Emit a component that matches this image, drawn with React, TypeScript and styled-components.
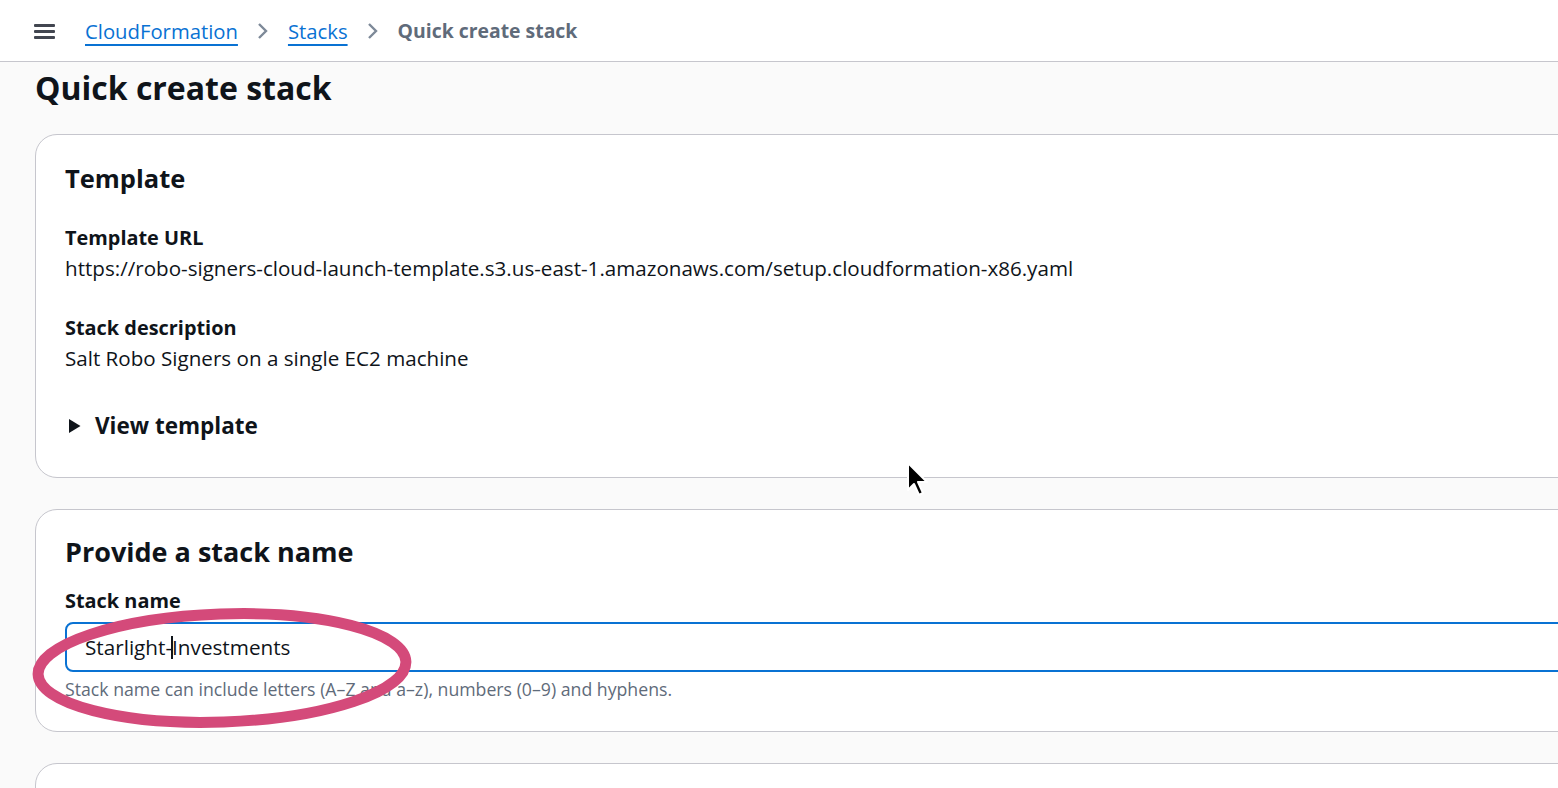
import React from "react";
import styled, { createGlobalStyle } from "styled-components";

const GlobalStyle = createGlobalStyle`
  html, body {
    margin: 0;
    padding: 0;
    background: #fafafa;
    overflow: hidden;
  }
  body {
    font-family: "Open Sans", "Noto Sans", Arial, sans-serif;
    color: #0f141a;
  }
`;

const Page = styled.div`
  position: relative;
  width: 100%;
  height: 788px;
  overflow: hidden;
`;

const TopBar = styled.header`
  height: 62px;
  box-sizing: border-box;
  background: #ffffff;
  border-bottom: 1px solid #c6c6cd;
  display: flex;
  align-items: center;
  padding-left: 34px;
  gap: 30px;
`;

const MenuButton = styled.span`
  display: flex;
  flex-direction: column;
  justify-content: space-between;
  width: 21px;
  height: 15px;
  margin-top: 2px;

  & span {
    display: block;
    height: 3px;
    background: #424650;
    border-radius: 1px;
  }
`;

const Crumbs = styled.nav`
  display: flex;
  align-items: center;
  gap: 19px;
  font-size: 20.3px;
`;

const CrumbLink = styled.a`
  color: #0972d3;
  text-decoration: underline;
  text-decoration-thickness: 2px;
  text-underline-offset: 5px;
`;

const CrumbCurrent = styled.span`
  color: #5f6b7a;
  font-weight: 700;
  font-size: 19.4px;
`;

const Chevron = () => (
  <svg width="12" height="20" viewBox="0 0 12 20">
    <path d="M2 3 L9 10 L2 17" fill="none" stroke="#7d8998" strokeWidth="2.4" />
  </svg>
);

const Main = styled.main`
  padding-left: 35px;
`;

const Title = styled.h1`
  margin: 6px 0 26px 0;
  font-size: 32px;
  line-height: 40px;
  font-weight: 700;
`;

const Card = styled.section<{ $pt: number; $pb: number }>`
  width: 1600px;
  box-sizing: border-box;
  background: #ffffff;
  border: 1px solid #c6c6cd;
  border-radius: 22px;
  padding: ${({ $pt }) => $pt}px 30px ${({ $pb }) => $pb}px 29px;
  margin-bottom: 31px;
`;

const CardHeading = styled.h2<{ $size: number }>`
  margin: 0;
  font-size: ${({ $size }) => $size}px;
  line-height: 32px;
  font-weight: 700;
`;

const Field = styled.div<{ $mt: number }>`
  margin-top: ${({ $mt }) => $mt}px;
  line-height: 30px;
`;

const Label = styled.div`
  font-size: 19.9px;
  font-weight: 700;
`;

const Value = styled.div`
  font-size: 20.6px;
  color: #0f141a;
`;

const Expander = styled.div`
  margin-top: 38px;
  display: flex;
  align-items: center;
  gap: 14px;
  font-size: 22.5px;
  line-height: 30px;
  font-weight: 700;
  padding-left: 3px;
`;

const InputLabel = styled.div`
  margin-top: 18px;
  font-size: 19.9px;
  line-height: 30px;
  font-weight: 700;
`;

const InputBox = styled.div`
  margin-top: 6px;
  height: 50px;
  box-sizing: border-box;
  border: 2px solid #0972d3;
  border-radius: 8px;
  display: flex;
  align-items: center;
  padding-left: 18px;
  font-size: 20.7px;
  color: #0f141a;
`;

const Caret = styled.span`
  display: inline-block;
  width: 2px;
  height: 23px;
  background: #0f141a;
  vertical-align: -4px;
  margin: 0 -1px;
`;

const Hint = styled.div`
  margin-top: 5px;
  font-size: 17.7px;
  line-height: 24px;
  color: #5f6b7a;
`;

const Annotation = styled.svg`
  position: absolute;
  left: 26px;
  top: 601px;
  pointer-events: none;
`;

const Pointer = styled.svg`
  position: absolute;
  left: 903px;
  top: 460px;
`;

export default function App() {
  return (
    <Page>
      <GlobalStyle />
      <TopBar>
        <MenuButton>
          <span />
          <span />
          <span />
        </MenuButton>
        <Crumbs>
          <CrumbLink>CloudFormation</CrumbLink>
          <Chevron />
          <CrumbLink>Stacks</CrumbLink>
          <Chevron />
          <CrumbCurrent>Quick create stack</CrumbCurrent>
        </Crumbs>
      </TopBar>
      <Main>
        <Title>Quick create stack</Title>
        <Card $pt={27} $pb={36}>
          <CardHeading $size={25.5}>Template</CardHeading>
          <Field $mt={29}>
            <Label>Template URL</Label>
            <Value>
              https://robo-signers-cloud-launch-template.s3.us-east-1.amazonaws.com/setup.cloudformation-x86.yaml
            </Value>
          </Field>
          <Field $mt={30}>
            <Label>Stack description</Label>
            <Value>Salt Robo Signers on a single EC2 machine</Value>
          </Field>
          <Expander>
            <svg width="13" height="16" viewBox="0 0 13 16">
              <path d="M1 1 L12.5 8 L1 15 Z" fill="#0f141a" strokeLinejoin="round" />
            </svg>
            View template
          </Expander>
        </Card>
        <Card $pt={26} $pb={30}>
          <CardHeading $size={27}>Provide a stack name</CardHeading>
          <InputLabel>Stack name</InputLabel>
          <InputBox>
            <span>
              Starlight-<Caret />Investments
            </span>
          </InputBox>
          <Hint>Stack name can include letters (A–Z and a–z), numbers (0–9) and hyphens.</Hint>
        </Card>
        <Card $pt={26} $pb={30} style={{ height: 60 }} />
      </Main>
      <Annotation width="400" height="135" viewBox="0 0 400 135">
        <ellipse
          cx="196"
          cy="67"
          rx="184"
          ry="54"
          fill="none"
          stroke="#d44a7a"
          strokeWidth="11"
          transform="rotate(-2 196 67)"
        />
      </Annotation>
      <Pointer width="30" height="40" viewBox="0 0 30 40">
        <path
          d="M5 3 L5 30 L11 24 L16 35 L20 33 L15 22 L24 22 Z"
          fill="#000"
          stroke="#fff"
          strokeWidth="2"
          strokeLinejoin="round"
        />
      </Pointer>
    </Page>
  );
}
